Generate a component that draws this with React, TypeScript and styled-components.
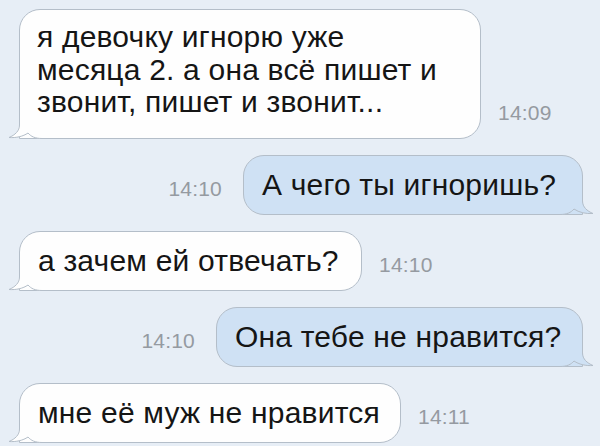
import React from "react";
import styled, { createGlobalStyle } from "styled-components";

const Global = createGlobalStyle`
  html, body { margin: 0; padding: 0; background: #e7eef6; }
  body { width: 600px; height: 446px; overflow: hidden; }
`;

const Page = styled.div`
  width: 600px;
  height: 446px;
  box-sizing: border-box;
  padding: 9px 17px 0 19px;
  display: flex;
  flex-direction: column;
  gap: 16px;
  background: #e7eef6;
  font-family: "Liberation Sans", Arial, sans-serif;
`;

const Row = styled.div<{ $out?: boolean }>`
  display: flex;
  align-items: flex-end;
  justify-content: ${(p) => (p.$out ? "flex-end" : "flex-start")};
  gap: ${(p) => (p.$out ? "21px" : "17px")};
`;

const Bubble = styled.div<{ $out?: boolean; $w: number; $multi?: boolean }>`
  position: relative;
  box-sizing: border-box;
  width: ${(p) => p.$w}px;
  padding: ${(p) => (p.$multi ? "11px 18px 19px 17px" : "13px 18px 13px 18px")};
  background: ${(p) => (p.$out ? "#cfe1f4" : "#fefefe")};
  border: 1px solid #b4bec9;
  border-radius: 21px;
  ${(p) => (p.$out ? "border-bottom-right-radius: 0;" : "border-bottom-left-radius: 0;")}
  font-size: 30px;
  line-height: ${(p) => (p.$multi ? "32.5px" : "32px")};
  color: #151515;
  letter-spacing: 0.2px;
  white-space: nowrap;
`;

const Text = styled.span`
  position: relative;
`;

const TailSvg = styled.svg<{ $out?: boolean }>`
  position: absolute;
  bottom: -1px;
  ${(p) => (p.$out ? "right: -12px; transform: scaleX(-1);" : "left: -12px;")}
  width: 34px;
  height: 24px;
  overflow: visible;
`;

const Time = styled.div`
  font-size: 21px;
  line-height: 20px;
  color: #959aa1;
  margin-bottom: 16px;
  letter-spacing: 0.2px;
`;

const Tail: React.FC<{ out?: boolean }> = ({ out }) => {
  const fill = out ? "#cfe1f4" : "#fefefe";
  return (
    <TailSvg $out={out} viewBox="0 0 34 24">
      <path
        d="M11 0 L11 10 C11 16 7 20 1 22.5 C8 23 15 21.5 20 18 C23 21.5 27 23.5 34 23.5 L34 0 Z"
        fill={fill}
      />
      <path
        d="M11.5 0 L11.5 10 C11.5 16 7 20 1 22.5 C8 23 15 21.5 20 18 C23 21.5 27 23.5 34 23.5"
        fill="none"
        stroke="#b4bec9"
        strokeWidth="1"
      />
    </TailSvg>
  );
};

export default function App() {
  return (
    <>
      <Global />
      <Page>
        <Row>
          <Bubble $w={462} $multi>
            <Tail />
            <Text>
              я девочку игнорю уже
              <br />
              месяца 2. а она всё пишет и
              <br />
              звонит, пишет и звонит...
            </Text>
          </Bubble>
          <Time>14:09</Time>
        </Row>
        <Row $out>
          <Time>14:10</Time>
          <Bubble $out $w={340}>
            <Tail out />
            <Text>А чего ты игноришь?</Text>
          </Bubble>
        </Row>
        <Row>
          <Bubble $w={343}>
            <Tail />
            <Text>а зачем ей отвечать?</Text>
          </Bubble>
          <Time>14:10</Time>
        </Row>
        <Row $out>
          <Time>14:10</Time>
          <Bubble $out $w={367}>
            <Tail out />
            <Text>Она тебе не нравится?</Text>
          </Bubble>
        </Row>
        <Row>
          <Bubble $w={382}>
            <Tail />
            <Text>мне её муж не нравится</Text>
          </Bubble>
          <Time>14:11</Time>
        </Row>
      </Page>
    </>
  );
}
